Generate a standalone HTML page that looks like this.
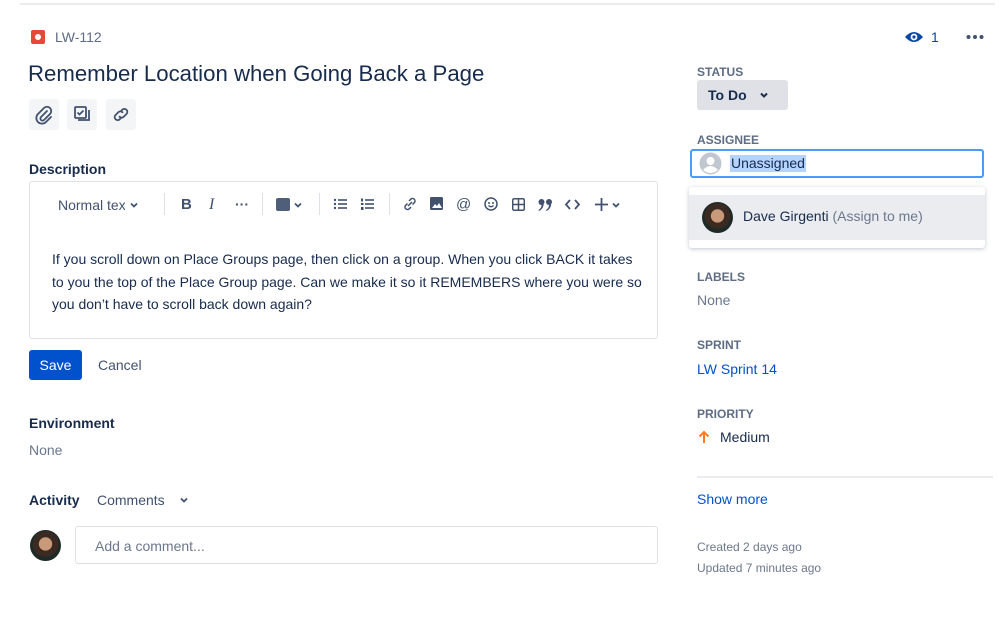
<!DOCTYPE html>
<html><head><meta charset="utf-8"><style>
*{margin:0;padding:0;box-sizing:border-box}
body{width:999px;height:640px;background:#fff;position:relative;overflow:hidden;font-family:"Liberation Sans",sans-serif;color:#172b4d;font-size:14px}
.a{position:absolute;white-space:nowrap}
.lbl{font-size:12px;font-weight:bold;color:#5e6c84}
.g{color:#6b778c}
.ib{position:absolute;top:99px;width:30px;height:31px;background:#f4f5f7;border-radius:3px}
.tb{position:absolute;top:196px;color:#42526e}
.sep{position:absolute;top:193px;width:1px;height:22px;background:#dfe1e6}
.chev{position:absolute}
</style></head><body>
<div class="a" style="left:20px;top:3px;width:975px;height:2px;background:#ebecf0"></div>

<div class="a" style="left:31px;top:30px;width:14px;height:14px;background:#e5493a;border-radius:2px"><div style="position:absolute;left:4px;top:4px;width:6px;height:6px;background:#fff;border-radius:50%"></div></div>
<div class="a" style="left:55px;top:29px;color:#5e6c84;font-size:14px">LW-112</div>
<div class="a" style="left:28px;top:61px;font-size:22.2px;color:#172b4d">Remember Location when Going Back a Page</div>

<div class="ib" style="left:29px"><svg width="30" height="31" viewBox="0 0 30 31"><path d="M18 12l-6 6a2 2 0 0 0 3 3l6-6a4 4 0 0 0-6-6l-6 6a5.5 5.5 0 0 0 8 8l5-5" fill="none" stroke="#42526e" stroke-width="1.8" stroke-linecap="round"/></svg></div>
<div class="ib" style="left:67px"><svg width="30" height="31" viewBox="0 0 30 31"><rect x="8" y="8" width="11" height="11" rx="1" fill="none" stroke="#42526e" stroke-width="1.8"/><path d="M10.5 13.5l2 2 4-4" fill="none" stroke="#42526e" stroke-width="1.8"/><path d="M22 11v10h-11" fill="none" stroke="#42526e" stroke-width="1.8"/></svg></div>
<div class="ib" style="left:106px"><svg width="30" height="31" viewBox="0 0 30 31"><path d="M15 12l1.5-1.5a3 3 0 0 1 4.2 4.2l-3 3a3 3 0 0 1-4.2 0M15 19l-1.5 1.5a3 3 0 0 1-4.2-4.2l3-3a3 3 0 0 1 4.2 0" fill="none" stroke="#42526e" stroke-width="1.8" stroke-linecap="round"/></svg></div>

<div class="a" style="left:29px;top:161px;font-weight:bold;font-size:14px">Description</div>
<div class="a" style="left:29px;top:181px;width:629px;height:158px;border:1px solid #dfe1e6;border-radius:3px"></div>
<div class="a" style="left:58px;top:197px;width:67px;height:18px;overflow:hidden;color:#42526e">Normal text</div>
<svg class="chev" style="left:129px;top:200px" width="10" height="10"><path d="M2 3.5l3 3 3-3" fill="none" stroke="#42526e" stroke-width="1.8"/></svg>
<div class="sep" style="left:164px"></div>
<div class="tb" style="left:181px;font-weight:bold;font-size:15px">B</div>
<div class="tb" style="left:209px;font-style:italic;font-size:16px;font-family:'Liberation Serif',serif">I</div>
<div class="tb" style="left:235px;font-weight:bold">···</div>
<div class="sep" style="left:262px"></div>
<div class="a" style="left:276px;top:198px;width:14px;height:13px;background:#505f79;border-radius:2px"></div>
<svg class="chev" style="left:293px;top:200px" width="10" height="10"><path d="M2 3.5l3 3 3-3" fill="none" stroke="#42526e" stroke-width="1.8"/></svg>
<div class="sep" style="left:319px"></div>
<svg class="a" style="left:333px;top:197px" width="15" height="14"><g fill="#42526e"><circle cx="2" cy="3" r="1.2"/><circle cx="2" cy="7" r="1.2"/><circle cx="2" cy="11" r="1.2"/><rect x="5" y="2.2" width="9" height="1.6"/><rect x="5" y="6.2" width="9" height="1.6"/><rect x="5" y="10.2" width="9" height="1.6"/></g></svg>
<svg class="a" style="left:360px;top:197px" width="15" height="14"><g fill="#42526e"><rect x="1" y="1.5" width="2" height="3"/><rect x="1" y="6" width="2.5" height="2"/><rect x="1" y="10" width="2.5" height="3"/><rect x="5" y="2.2" width="9" height="1.6"/><rect x="5" y="6.2" width="9" height="1.6"/><rect x="5" y="10.2" width="9" height="1.6"/></g></svg>
<div class="sep" style="left:389px"></div>
<svg class="a" style="left:402px;top:196px" width="16" height="16" viewBox="0 0 16 16"><path d="M7 5l2-2a2.5 2.5 0 0 1 3.5 3.5l-2 2M9 11l-2 2a2.5 2.5 0 0 1-3.5-3.5l2-2M6 10l4-4" fill="none" stroke="#42526e" stroke-width="1.5"/></svg>
<svg class="a" style="left:430px;top:197px" width="14" height="14"><rect width="13" height="13" rx="1.5" fill="#42526e"/><path d="M2 11l3-4 2 2 2-3 3 5z" fill="#fff"/></svg>
<div class="tb" style="left:456px;font-size:15px">@</div>
<svg class="a" style="left:483px;top:196px" width="16" height="16"><circle cx="8" cy="8" r="6" fill="none" stroke="#42526e" stroke-width="1.5"/><circle cx="6" cy="7" r="1" fill="#42526e"/><circle cx="10" cy="7" r="1" fill="#42526e"/><path d="M5.5 9.5q2.5 2.5 5 0" fill="none" stroke="#42526e" stroke-width="1.3"/></svg>
<svg class="a" style="left:512px;top:198px" width="13" height="13"><rect x="0.7" y="0.7" width="11.6" height="11.6" rx="1.5" fill="none" stroke="#42526e" stroke-width="1.5"/><path d="M6.5 1v11M1 6.5h11" stroke="#42526e" stroke-width="1.5"/></svg>
<svg class="a" style="left:538px;top:198px" width="15" height="14"><g fill="#42526e"><circle cx="3.5" cy="4" r="3"/><path d="M5.5 4q1 6-4.5 9l-.5-1q3-2 3-5z"/><circle cx="11" cy="4" r="3"/><path d="M13 4q1 6-4.5 9l-.5-1q3-2 3-5z"/></g></svg>
<svg class="a" style="left:564px;top:198px" width="17" height="13"><path d="M6 2L2 6.5 6 11M11 2l4 4.5-4 4.5" fill="none" stroke="#42526e" stroke-width="1.8"/></svg>
<svg class="a" style="left:595px;top:198px" width="13" height="13"><path d="M6.5 0v13M0 6.5h13" stroke="#42526e" stroke-width="1.8"/></svg>
<svg class="chev" style="left:611px;top:200px" width="10" height="10"><path d="M2 3.5l3 3 3-3" fill="none" stroke="#42526e" stroke-width="1.8"/></svg>

<div class="a" style="left:52px;top:248px;line-height:22.5px;font-size:14px">If you scroll down on Place Groups page, then click on a group. When you click BACK it takes<br>to you the top of the Place Group page. Can we make it so it REMEMBERS where you were so<br>you don’t have to scroll back down again?</div>

<div class="a" style="left:29px;top:350px;width:53px;height:30px;background:#0052cc;color:#fff;border-radius:3px;text-align:center;line-height:30px">Save</div>
<div class="a" style="left:98px;top:357px;color:#42526e">Cancel</div>

<div class="a" style="left:29px;top:415px;font-weight:bold">Environment</div>
<div class="a g" style="left:29px;top:442px">None</div>

<div class="a" style="left:29px;top:492px;font-weight:bold">Activity</div>
<div class="a" style="left:97px;top:492px;color:#42526e">Comments</div>
<svg class="chev" style="left:179px;top:495px" width="10" height="10"><path d="M2 3.5l3 3 3-3" fill="none" stroke="#42526e" stroke-width="1.8"/></svg>
<div class="a" style="left:30px;top:530px;width:31px;height:31px;border-radius:50%;background:radial-gradient(circle at 50% 45%,#c89a7a 0 28%,#3a2a22 30% 55%,#1e2a28 56%)"></div>
<div class="a" style="left:75px;top:526px;width:583px;height:38px;border:1px solid #dfe1e6;border-radius:3px"></div>
<div class="a g" style="left:95px;top:538px">Add a comment...</div>

<svg class="a" style="left:904px;top:29px" width="20" height="16" viewBox="0 0 20 16"><path d="M1 8q9-10 18 0q-9 10-18 0z" fill="#0747a6"/><circle cx="10" cy="8" r="3.4" fill="#fff"/><circle cx="10" cy="8" r="1.6" fill="#0747a6"/></svg>
<div class="a" style="left:931px;top:29px;color:#0747a6">1</div>
<svg class="a" style="left:966px;top:34px" width="18" height="6"><g fill="#42526e"><circle cx="2.5" cy="3" r="2"/><circle cx="9" cy="3" r="2"/><circle cx="15.5" cy="3" r="2"/></g></svg>

<div class="a lbl" style="left:697px;top:65px">STATUS</div>
<div class="a" style="left:697px;top:80px;width:91px;height:30px;background:#dfe1e6;border-radius:3px"></div>
<div class="a" style="left:708px;top:87px;font-weight:bold;font-size:14px">To Do</div>
<svg class="chev" style="left:759px;top:90px" width="10" height="10"><path d="M2 3.5l3 3 3-3" fill="none" stroke="#172b4d" stroke-width="2"/></svg>

<div class="a lbl" style="left:697px;top:133px">ASSIGNEE</div>
<div class="a" style="left:690px;top:149px;width:294px;height:29px;border:2px solid #4c9aff;border-radius:3px"></div>
<svg class="a" style="left:699px;top:152px" width="23" height="23"><circle cx="11.5" cy="11.5" r="11" fill="#c1c7d0"/><circle cx="11.5" cy="9" r="4" fill="#fff"/><path d="M4 18q7.5-8 15 0q-7.5 6-15 0z" fill="#fff"/></svg>
<div class="a" style="left:730px;top:155px;background:#b3d4ff;padding:0 1px;line-height:17px">Unassigned</div>

<div class="a" style="left:689px;top:187px;width:296px;height:61px;border-radius:3px;box-shadow:0 1px 4px rgba(9,30,66,.25);background:#fff"></div>
<div class="a" style="left:689px;top:195px;width:296px;height:45px;background:#ebecf0"></div>
<div class="a" style="left:702px;top:202px;width:31px;height:31px;border-radius:50%;background:radial-gradient(circle at 50% 45%,#c89a7a 0 28%,#3a2a22 30% 55%,#1e2a28 56%)"></div>
<div class="a" style="left:743px;top:208px">Dave Girgenti <span class="g">(Assign to me)</span></div>

<div class="a lbl" style="left:697px;top:270px">LABELS</div>
<div class="a g" style="left:697px;top:292px">None</div>
<div class="a lbl" style="left:697px;top:338px">SPRINT</div>
<div class="a" style="left:697px;top:361px;color:#0052cc">LW Sprint 14</div>
<div class="a lbl" style="left:697px;top:407px">PRIORITY</div>
<svg class="a" style="left:698px;top:430px" width="12" height="14"><path d="M6 13V2M1.5 6.5L6 2l4.5 4.5" fill="none" stroke="#ff7a1f" stroke-width="2"/></svg>
<div class="a" style="left:720px;top:429px">Medium</div>
<div class="a" style="left:697px;top:476px;width:296px;height:2px;background:#ebecf0"></div>
<div class="a" style="left:697px;top:491px;color:#0052cc">Show more</div>
<div class="a g" style="left:697px;top:540px;font-size:12px">Created 2 days ago</div>
<div class="a g" style="left:697px;top:561px;font-size:12px">Updated 7 minutes ago</div>
</body></html>
